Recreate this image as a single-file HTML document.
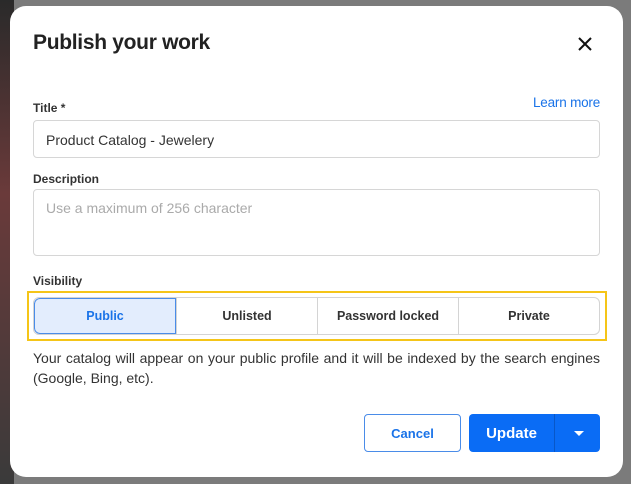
<!DOCTYPE html>
<html><head><style>
*{box-sizing:border-box;margin:0;padding:0}
body{width:631px;height:484px;background:#7b7b7b;font-family:"Liberation Sans",sans-serif;position:relative;overflow:hidden}
.bgl{position:absolute;left:0;top:0;width:14px;height:484px;background:linear-gradient(#2a2a2a,#6a3a3a 40%,#3a3a3a)}
.m{position:absolute;left:10px;top:6px;width:613px;height:471px;background:#fff;border-radius:16px}
.a{position:absolute}
h1{position:absolute;left:33px;top:31px;font-size:21px;font-weight:bold;color:#222;letter-spacing:-0.3px}
.lbl{font-size:12px;font-weight:bold;color:#333}
.inp{border:1px solid #d6d6d6;border-radius:4px;left:33px;width:567px}
.seg{left:33px;top:297px;width:567px;height:38px;border:1px solid #d4d4d4;border-radius:6px;display:flex;overflow:hidden}
.seg div{flex:1;display:flex;align-items:center;justify-content:center;font-size:12.5px;font-weight:bold;color:#333;border-left:1px solid #d4d4d4}
.seg div:first-child{border:1px solid #4a8ce8;background:#e3edfd;color:#1a73e8;border-radius:6px 0 0 6px;flex:0 0 142px}
</style></head><body>
<div class="bgl"></div>
<div class="m"></div>
<h1>Publish your work</h1>
<svg class="a" style="left:578px;top:37px" width="14" height="14" viewBox="0 0 14 14"><path d="M1 1L13 13M13 1L1 13" stroke="#111" stroke-width="2"/></svg>
<div class="a lbl" style="left:33px;top:101px">Title *</div>
<div class="a" style="left:533px;top:95px;font-size:13.5px;color:#1a73e8;letter-spacing:-0.2px">Learn more</div>
<div class="a inp" style="top:120px;height:38px;font-size:14px;color:#333;padding:11px 12px">Product Catalog - Jewelery</div>
<div class="a lbl" style="left:33px;top:172px">Description</div>
<div class="a inp" style="top:189px;height:67px;font-size:14px;color:#aaa;padding:10px 12px">Use a maximum of 256 character</div>
<div class="a lbl" style="left:33px;top:274px">Visibility</div>
<div class="a" style="left:27px;top:291px;width:580px;height:50px;border:2px solid #f5c518"></div>
<div class="a seg"><div>Public</div><div>Unlisted</div><div>Password locked</div><div>Private</div></div>
<div class="a" style="left:33px;top:348px;width:567px;font-size:14px;line-height:20px;color:#333;text-align:justify;text-align-last:left">Your catalog will appear on your public profile and it will be indexed by the search engines (Google, Bing, etc).</div>
<div class="a" style="left:364px;top:414px;width:97px;height:38px;border:1px solid #4a8ce8;border-radius:4px;color:#1a73e8;font-size:13px;font-weight:bold;display:flex;align-items:center;justify-content:center">Cancel</div>
<div class="a" style="left:469px;top:414px;width:131px;height:38px;background:#0a6cf5;border-radius:4px;color:#fff;font-size:15px;font-weight:bold">
<div class="a" style="left:0;top:0;width:85px;height:38px;display:flex;align-items:center;justify-content:center">Update</div>
<div class="a" style="left:85px;top:0;width:1px;height:38px;background:#0857c8"></div>
<svg class="a" style="left:105px;top:17px" width="10" height="5"><path d="M0 0L10 0L5 5Z" fill="#fff"/></svg>
</div>
</body></html>
